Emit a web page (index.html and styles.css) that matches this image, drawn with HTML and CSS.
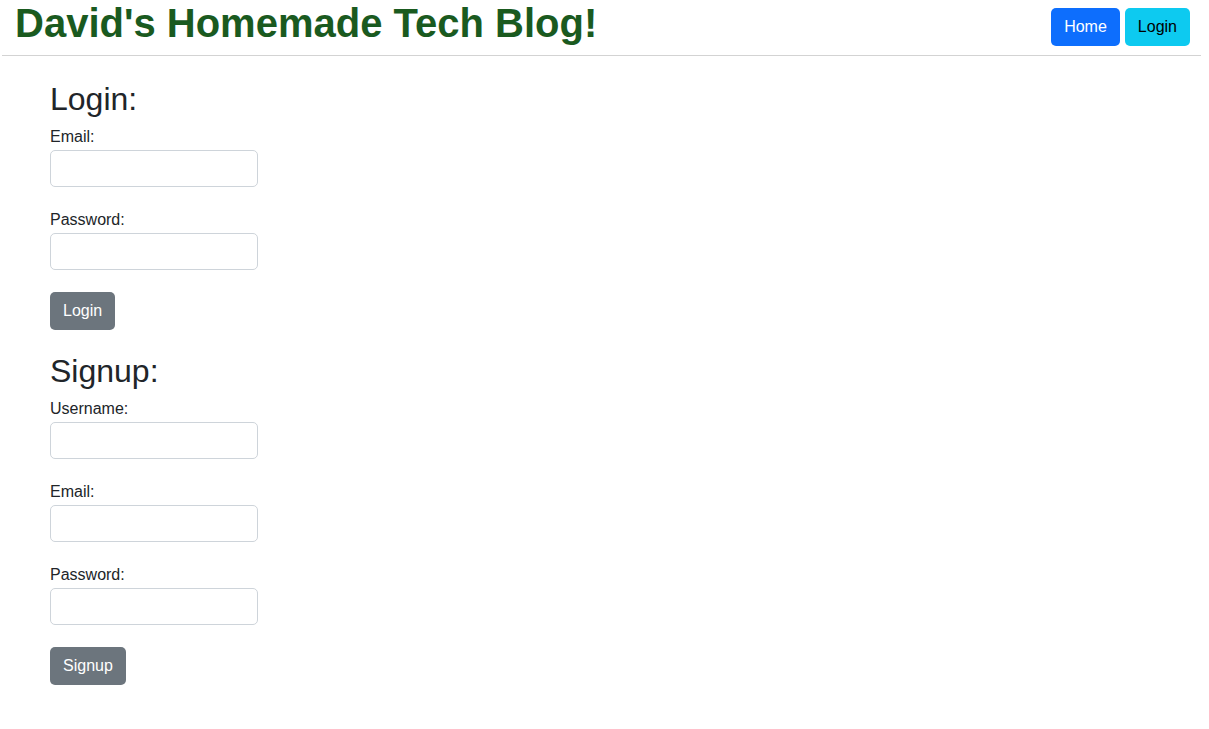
FILE: index.html
```html
<!DOCTYPE html>
<html lang="en">
<head>
<meta charset="utf-8">
<title>David's Homemade Tech Blog!</title>
<link rel="stylesheet" href="styles.css">
</head>
<body>
<header class="site-header">
  <h1 class="site-title">David's Homemade Tech Blog!</h1>
  <nav class="nav">
    <a class="btn btn-primary" href="#">Home</a>
    <a class="btn btn-info" href="#">Login</a>
  </nav>
</header>
<main class="content">
  <section class="form-section">
    <h2 class="form-title">Login:</h2>
    <form class="form">
      <div class="form-group">
        <label class="form-label">Email:</label>
        <input class="form-input" type="email">
      </div>
      <div class="form-group">
        <label class="form-label">Password:</label>
        <input class="form-input" type="password">
      </div>
      <button class="btn btn-secondary" type="button">Login</button>
    </form>
  </section>
  <section class="form-section">
    <h2 class="form-title">Signup:</h2>
    <form class="form">
      <div class="form-group">
        <label class="form-label">Username:</label>
        <input class="form-input" type="text">
      </div>
      <div class="form-group">
        <label class="form-label">Email:</label>
        <input class="form-input" type="email">
      </div>
      <div class="form-group">
        <label class="form-label">Password:</label>
        <input class="form-input" type="password">
      </div>
      <button class="btn btn-secondary" type="button">Signup</button>
    </form>
  </section>
</main>
</body>
</html>
```
FILE: styles.css
```css
* { box-sizing: border-box; }
html, body { margin: 0; padding: 0; background: #fff; }
body {
  font-family: "Liberation Sans", Arial, sans-serif;
  font-size: 16px;
  line-height: 1.5;
  color: #212529;
}
.site-header {
  display: flex;
  justify-content: space-between;
  align-items: flex-start;
  height: 56px;
  margin: 0 8px 0 2px;
  padding: 0 11px 0 13px;
  border-bottom: 1px solid #d3d3d3;
}
.site-title {
  margin: 0;
  font-size: 40px;
  font-weight: 700;
  line-height: 46px;
  color: #1a5a1f;
}
.nav { display: flex; gap: 5px; padding-top: 8px; }
.btn {
  display: inline-block;
  font-family: inherit;
  font-size: 16px;
  line-height: 24px;
  padding: 6px 12px;
  border: 1px solid transparent;
  border-radius: 5px;
  text-decoration: none;
  cursor: pointer;
}
.btn-primary { background: #0d6efd; color: #fff; }
.btn-info { background: #0dcaf0; color: #000; }
.btn-secondary { background: #6c757d; color: #fff; margin-top: 1px; }
.content { padding: 24px 50px; }
.form-section { margin-bottom: 22px; }
.form-title {
  margin: 0 0 7px;
  font-size: 32px;
  font-weight: 500;
  line-height: 38px;
}
.form { display: flex; flex-direction: column; align-items: flex-start; }
.form-group { display: flex; flex-direction: column; align-items: flex-start; margin-bottom: 21px; }
.form-label { display: block; line-height: 24px; margin-bottom: 1px; }
.form-input {
  width: 208px;
  height: 37px;
  padding: 6px 12px;
  font-family: inherit;
  font-size: 16px;
  border: 1px solid #ced4da;
  border-radius: 5px;
  background: #fff;
}
```
